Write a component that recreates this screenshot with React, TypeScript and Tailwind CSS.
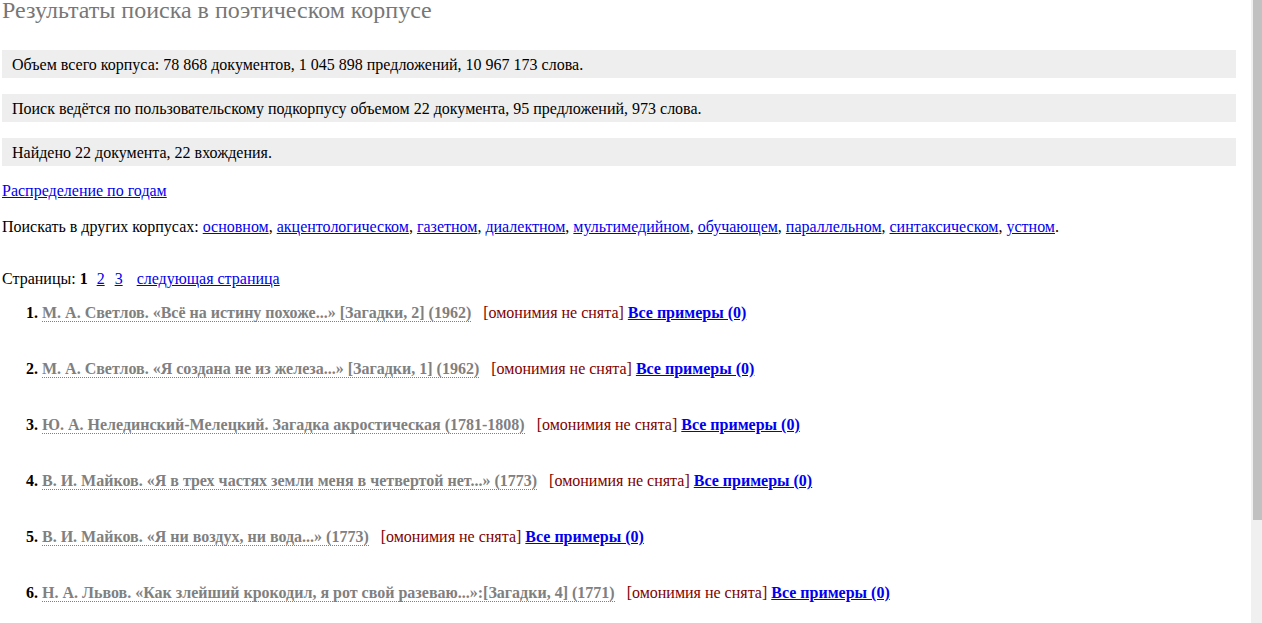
import React from 'react';

const corpora = [
  'основном',
  'акцентологическом',
  'газетном',
  'диалектном',
  'мультимедийном',
  'обучающем',
  'параллельном',
  'синтаксическом',
  'устном',
];

const results = [
  'М. А. Светлов. «Всё на истину похоже...» [Загадки, 2] (1962)',
  'М. А. Светлов. «Я создана не из железа...» [Загадки, 1] (1962)',
  'Ю. А. Нелединский-Мелецкий. Загадка акростическая (1781-1808)',
  'В. И. Майков. «Я в трех частях земли меня в четвертой нет...» (1773)',
  'В. И. Майков. «Я ни воздух, ни вода...» (1773)',
  'Н. А. Львов. «Как злейший крокодил, я рот свой разеваю...»:[Загадки, 4] (1771)',
];

const InfoBox = ({ children }: { children: React.ReactNode }) => (
  <div className="bg-[#eeeeee] h-[28px] flex items-center px-[10px] pt-[2px] mb-[16px]">{children}</div>
);

export default function App() {
  return (
    <div className="h-[623px] w-[1262px] overflow-hidden flex bg-white font-['Liberation_Serif',serif] text-[16px] text-black">
      <div className="flex-1 pl-[2px] pr-[15px]">
        <h1 className="text-[24px] leading-[20px] text-[#777777] mb-[30px]">
          Результаты поиска в поэтическом корпусе
        </h1>

        <InfoBox>Объем всего корпуса: 78 868 документов, 1 045 898 предложений, 10 967 173 слова.</InfoBox>
        <InfoBox>Поиск ведётся по пользовательскому подкорпусу объемом 22 документа, 95 предложений, 973 слова.</InfoBox>
        <InfoBox>Найдено 22 документа, 22 вхождения.</InfoBox>

        <div className="leading-[18px] mt-[1px]">
          <a href="#" className="text-[#0000ee] underline">Распределение по годам</a>
        </div>

        <div className="leading-[18px] mt-[18px]">
          Поискать в других корпусах:{' '}
          {corpora.map((c, i) => (
            <React.Fragment key={c}>
              <a href="#" className="text-[#0000ee] underline">{c}</a>
              {i < corpora.length - 1 ? ', ' : '.'}
            </React.Fragment>
          ))}
        </div>

        <div className="leading-[18px] mt-[34px]">
          Страницы: <b>1</b>
          <a href="#" className="text-[#0000ee] underline ml-[9px]">2</a>
          <a href="#" className="text-[#0000ee] underline ml-[10px]">3</a>
          <a href="#" className="text-[#0000ee] underline ml-[14px]">следующая страница</a>
        </div>

        <ol className="mt-[16px]">
          {results.map((r, i) => (
            <li key={i} className="leading-[18px] pl-[24px] mb-[38px]">
              <b>{i + 1}.</b>{' '}
              <span className="font-bold text-[#808080] border-b border-dotted border-[#808080]">{r}</span>
              <span className="ml-[12px] text-[#800000]">[омонимия не снята]</span>{' '}
              <a href="#" className="font-bold text-[#0000ee] underline">Все примеры (0)</a>
            </li>
          ))}
        </ol>
      </div>

      <div className="w-[11px] bg-[#f0f0f0] flex justify-end">
        <div className="w-[9px] h-[520px] bg-[#c1c1c1]" />
      </div>
    </div>
  );
}
